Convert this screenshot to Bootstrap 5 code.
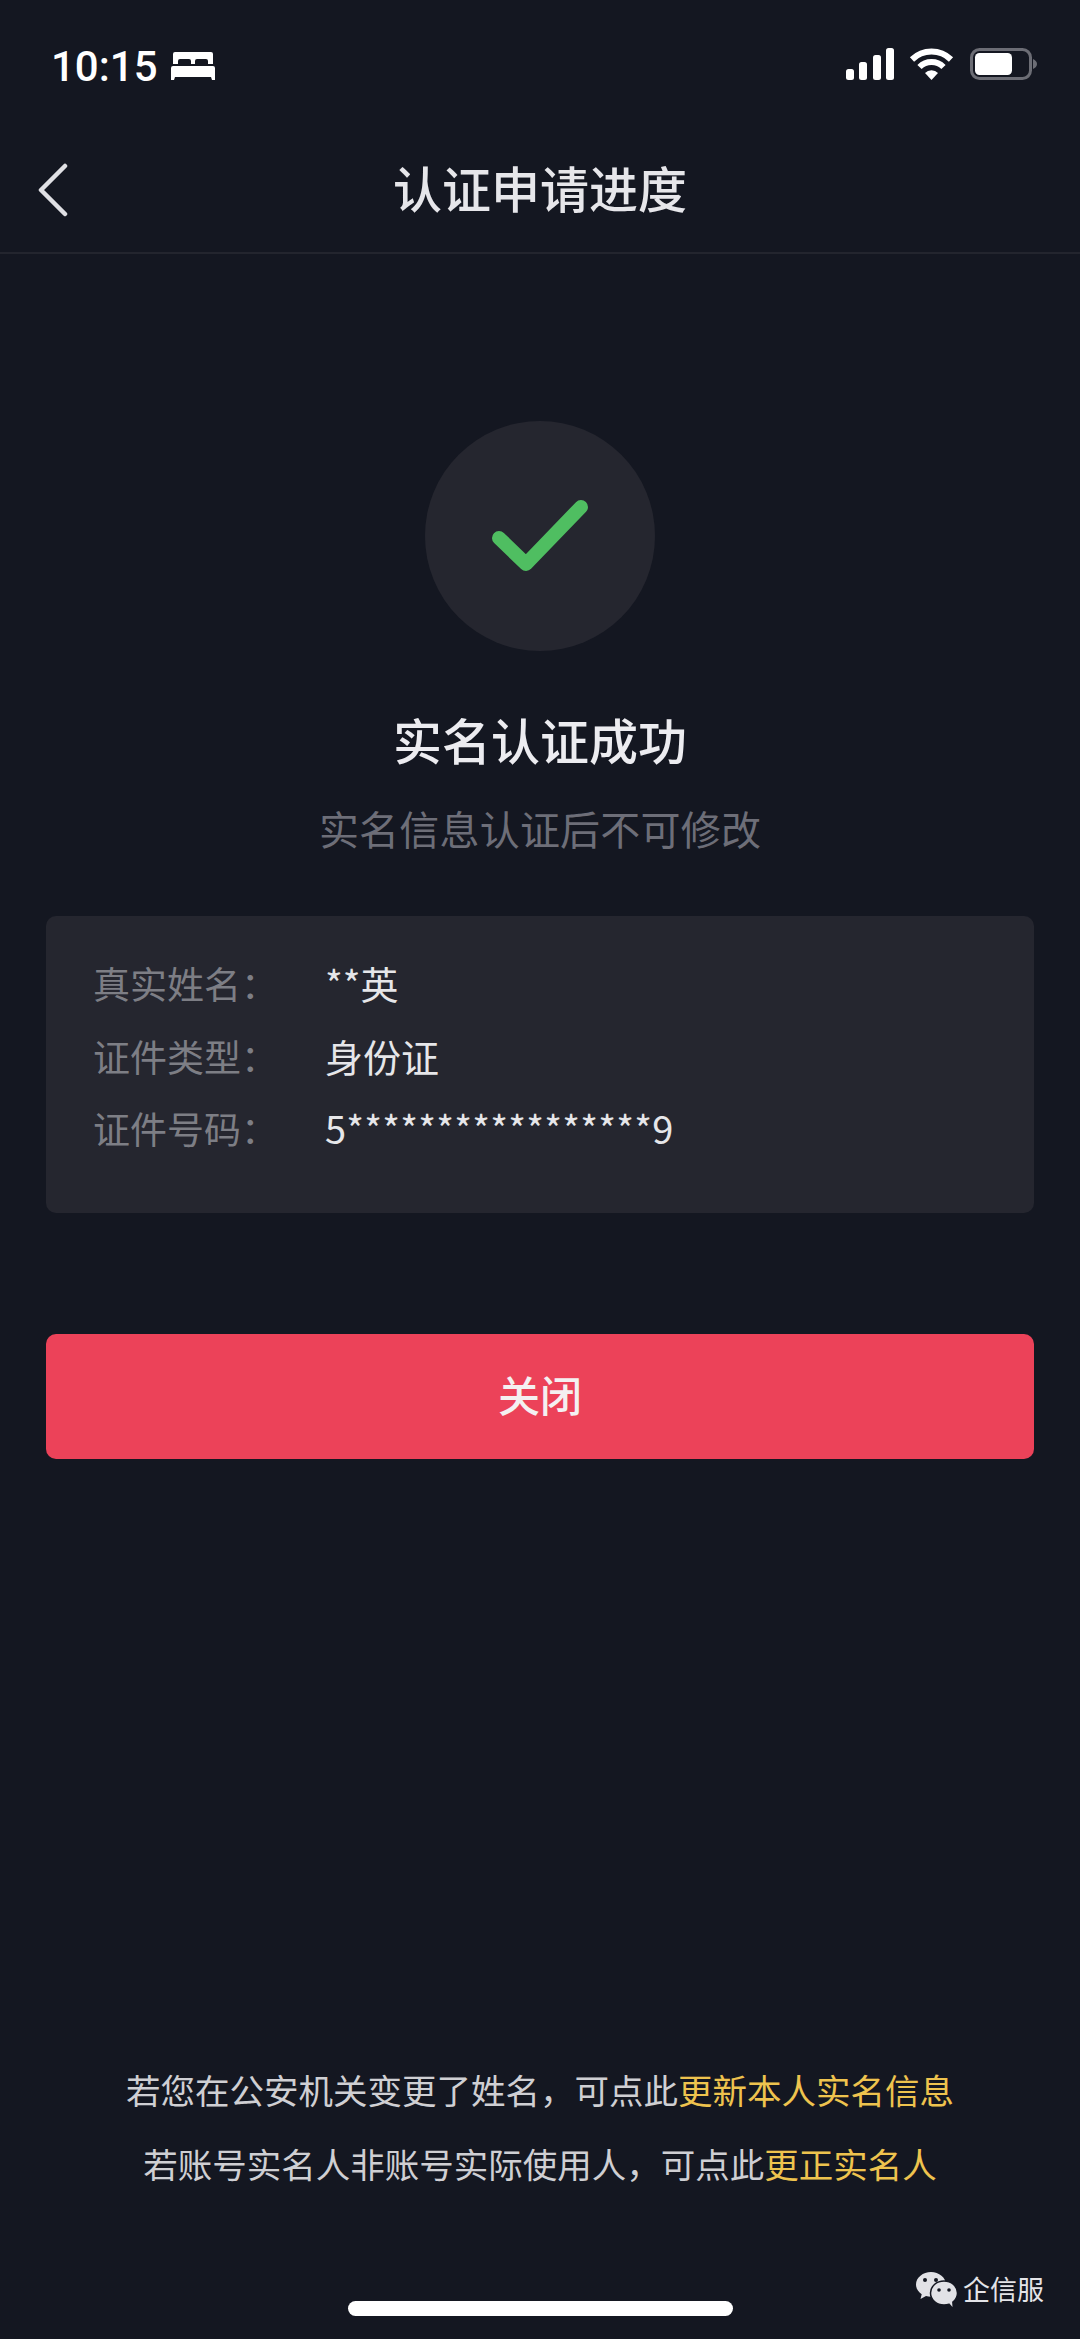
<!DOCTYPE html>
<html lang="zh-CN">
<head>
    <meta charset="UTF-8">
    <meta name="viewport" content="width=device-width, initial-scale=1.0">
    <title>认证申请进度</title>
    <link href="https://cdn.jsdelivr.net/npm/bootstrap@5.3.0/dist/css/bootstrap.min.css" rel="stylesheet">
    <style>
        body { background: #141721; font-family: "Noto Sans CJK SC", "Noto Sans", sans-serif; }
        .app-page { position: relative; height: 2339px; overflow: hidden; }
        .status-row { height: 127px; padding: 48px 43px 0 51px; }
        .status-time { font-family: Roboto, sans-serif; font-size: 42px; font-weight: 500; line-height: 38px; color: #fff; }
        .status-bed { margin-left: 4px; }
        .status-gap { margin-right: -2px; }
        .nav-row { display: grid; grid-template-columns: 1fr auto 1fr; height: 127px; border-bottom: 2px solid #23252e; padding: 0 37px; }
        .nav-title { font-size: 49px; font-weight: 500; line-height: 119px; color: #e6e6ea; }
        .done-circle { width: 230px; height: 230px; margin: 167px auto 0; background: #25262f; }
        .done-title { margin: 58px 0 0; font-size: 49px; font-weight: 500; line-height: 60px; color: #ececf0; }
        .done-sub { margin: 29px 0 0; font-size: 40px; letter-spacing: .2px; line-height: 60px; color: #6d6e78; }
        .info-box { margin: 58px 46px 0 46px; height: 297px; padding: 31px 47px 0; background: #25262f; border: 0; border-radius: 10px; }
        .info-row { height: 72.5px; font-size: 37px; line-height: 72.5px; }
        .info-label { width: 232px; color: #7d7e85; }
        .info-value { font-size: 38px; color: #e6e6e9; }
        .info-number { letter-spacing: .25px; }
        .close-wrap { margin: 121px 46px 0; }
        .close-btn { height: 125px; padding-bottom: 12px; background: #ec4259; border: 0; border-radius: 10px; color: #f4f0f1; font-size: 42px; font-weight: 500; }
        .foot-links { font-size: 34.5px; line-height: 74px; color: #cfcfd3; }
        .foot-links span { color: #eec34e; }
        .home-bar { width: 385px; height: 15px; margin: 101px auto 23px; background: #fff; }
        .wx-mark { position: absolute; left: 916px; top: 2271px; column-gap: 5px; color: #e4e4e8; font-size: 27px; line-height: 36px; }
    </style>
</head>
<body>
    <div class="app-page d-flex flex-column">
        <div class="status-row d-flex justify-content-between align-items-start">
            <div class="d-flex align-items-center gap-2">
                <span class="status-time">10:15</span>
                <svg class="status-bed" width="46" height="32" viewBox="0 0 46 32" fill="#fff">
                    <path d="M5 1h36a2 2 0 0 1 2 2v10h-5v-3a2 2 0 0 0-2-2h-9a2 2 0 0 0-2 2v3h-4v-3a2 2 0 0 0-2-2h-9a2 2 0 0 0-2 2v3H3V3a2 2 0 0 1 2-2z"/>
                    <path d="M3 15h40a2 2 0 0 1 2 2v12h-3l-1-3H5l-1 3H1V17a2 2 0 0 1 2-2z"/>
                </svg>
            </div>
            <div class="d-flex align-items-center gap-3">
                <svg class="status-gap" width="50" height="32" viewBox="0 0 48 32" fill="#fff">
                    <rect x="0" y="21" width="8" height="11" rx="2.500"/>
                    <rect x="13" y="14" width="8" height="18" rx="2.500"/>
                    <rect x="27" y="7" width="8" height="25" rx="2.500"/>
                    <rect x="40" y="0" width="8" height="32" rx="2.500"/>
                </svg>
                <svg width="45" height="32" viewBox="0 0 45 32" fill="none" stroke="#fff" stroke-width="6">
                    <path d="M3 11.500a28 28 0 0 1 39 0"/>
                    <path d="M10.500 19a17 17 0 0 1 24 0"/>
                    <path d="M22.500 32l-6.500-7a9 9 0 0 1 13 0z" fill="#fff" stroke="none"/>
                </svg>
                <svg width="67" height="32" viewBox="0 0 67 32">
                    <rect x="1.500" y="1.500" width="59" height="29" rx="8" fill="none" stroke="#6c6d75" stroke-width="3"/>
                    <rect x="5" y="5" width="37" height="22" rx="4.500" fill="#fff"/>
                    <path d="M63 11c2.500 1 4 3 4 5s-1.500 4-4 5z" fill="#6c6d75"/>
                </svg>
            </div>
        </div>

        <div class="nav-row">
            <div class="d-flex align-items-center">
                <svg width="32" height="54" viewBox="0 0 32 54" fill="none" stroke="#e0e0e4" stroke-width="4.500" stroke-linecap="round" stroke-linejoin="round">
                    <path d="M28 3L4 27l24 24"/>
                </svg>
            </div>
            <div class="nav-title">认证申请进度</div>
            <div></div>
        </div>

        <div class="done-circle rounded-circle d-flex align-items-center justify-content-center">
            <svg width="230" height="230" viewBox="0 0 230 230" fill="none" stroke="#4fbe61" stroke-width="14" stroke-linecap="round" stroke-linejoin="round">
                <path d="M74 117l27 26 55-57"/>
            </svg>
        </div>

        <h1 class="done-title text-center">实名认证成功</h1>
        <p class="done-sub text-center">实名信息认证后不可修改</p>

        <div class="card info-box">
            <div class="info-row d-flex"><div class="info-label">真实姓名：</div><div class="info-value">**英</div></div>
            <div class="info-row d-flex"><div class="info-label">证件类型：</div><div class="info-value">身份证</div></div>
            <div class="info-row d-flex"><div class="info-label">证件号码：</div><div class="info-value info-number">5*****************9</div></div>
        </div>

        <div class="close-wrap">
            <button type="button" class="btn close-btn w-100">关闭</button>
        </div>

        <div class="foot-links text-center mt-auto">
            <div>若您在公安机关变更了姓名，可点此<span>更新本人实名信息</span></div>
            <div>若账号实名人非账号实际使用人，可点此<span>更正实名人</span></div>
        </div>
        <div class="home-bar rounded-pill"></div>

        <div class="wx-mark d-flex align-items-center">
            <svg width="42" height="36" viewBox="0 0 42 36">
                <path d="M15 1C7 1 0 6.500 0 13.500c0 4 2.200 7.400 5.700 9.700L4.500 28l5.500-3c1.500.4 3.300.7 5 .7 8 0 15-5.500 15-12.200S23 1 15 1z" fill="#e2e2e6"/>
                <ellipse cx="28" cy="22" rx="13.500" ry="12" fill="#e2e2e6" stroke="#141721" stroke-width="1.500"/>
                <path d="M33 32l3.500 4-.5-6z" fill="#e2e2e6"/>
                <circle cx="9" cy="9" r="2" fill="#141721"/>
                <circle cx="20" cy="9" r="2" fill="#141721"/>
                <circle cx="23" cy="19" r="1.800" fill="#141721"/>
                <circle cx="33" cy="19" r="1.800" fill="#141721"/>
            </svg>
            <span>企信服</span>
        </div>
    </div>

    <script src="https://cdn.jsdelivr.net/npm/bootstrap@5.3.0/dist/js/bootstrap.bundle.min.js"></script>
</body>
</html>
